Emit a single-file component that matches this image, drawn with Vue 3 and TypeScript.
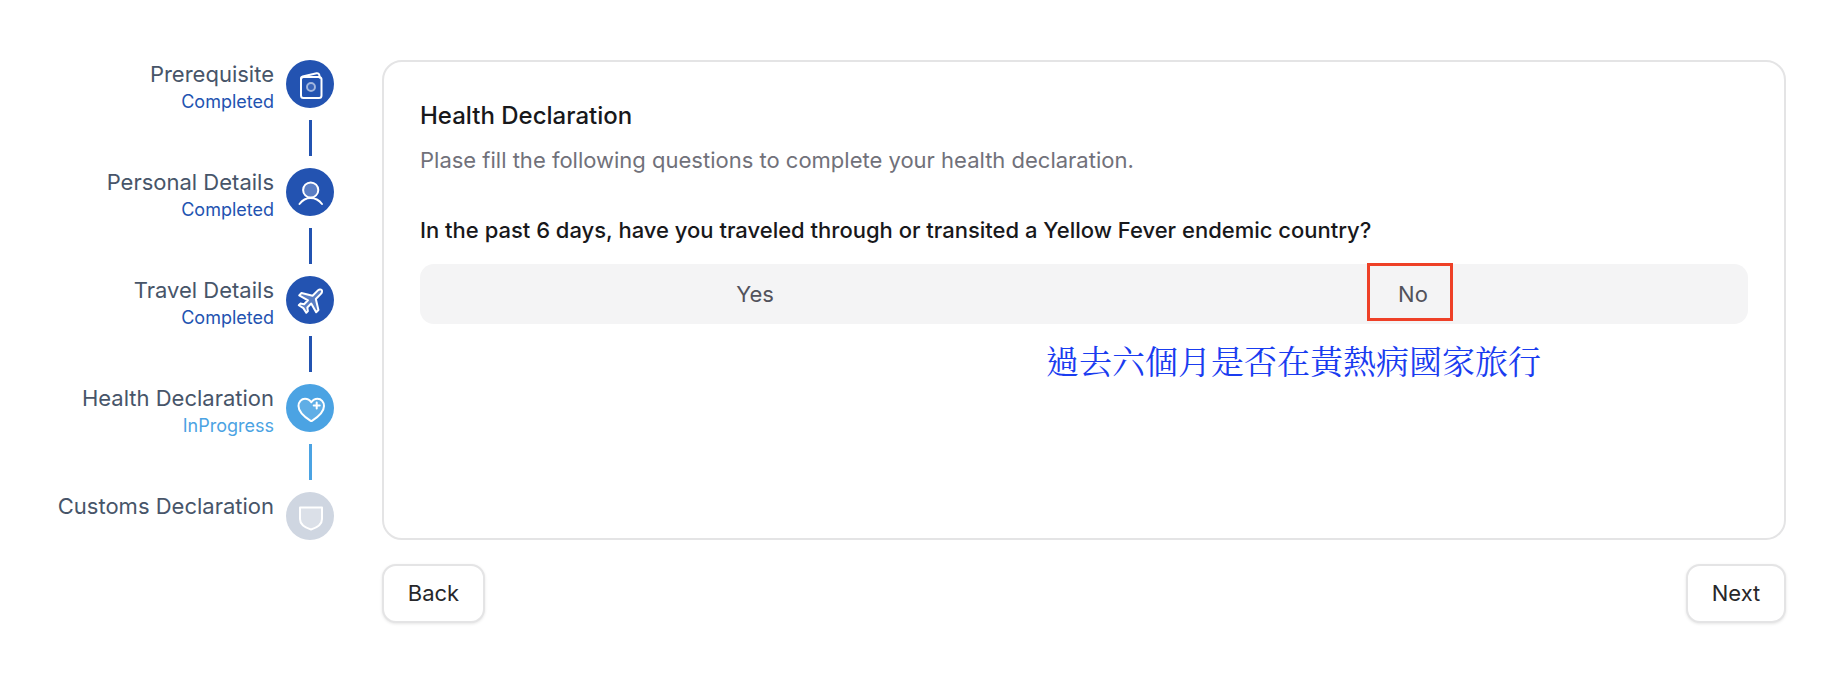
<script setup lang="ts">
interface Step {
  label: string;
  status: string;
  state: "done" | "active" | "todo";
  icon: string;
}
const steps: Step[] = [
  { label: "Prerequisite", status: "Completed", state: "done", icon: "book" },
  { label: "Personal Details", status: "Completed", state: "done", icon: "user" },
  { label: "Travel Details", status: "Completed", state: "done", icon: "plane" },
  { label: "Health Declaration", status: "InProgress", state: "active", icon: "heart" },
  { label: "Customs Declaration", status: "", state: "todo", icon: "shield" },
];
</script>

<template>
  <div class="page">
    <aside class="steps">
      <div v-for="(s, i) in steps" :key="s.label" class="step" :class="s.state">
        <div class="step-text">
          <div class="step-label">{{ s.label }}</div>
          <div v-if="s.status" class="step-status">{{ s.status }}</div>
        </div>
        <div class="step-rail">
          <div class="dot">
            <svg width="48" height="48" viewBox="0 0 48 48" fill="none" stroke="#fff" stroke-width="2" stroke-linecap="round" stroke-linejoin="round">
              <template v-if="s.icon === 'book'">
                <rect x="15" y="17" width="20.500" height="21" rx="2.500" />
                <path d="M15 20v-1.500c0-1 .7-1.700 1.600-1.900l14-3.300c1.300-.3 2.500.5 2.700 1.700l.4 2.500" />
                <circle cx="25" cy="27" r="4" fill="#fff" fill-opacity=".1" stroke-opacity=".55" />
              </template>
              <template v-else-if="s.icon === 'user'">
                <circle cx="24.700" cy="22" r="7.600" fill="#fff" fill-opacity=".25" />
                <path d="M13.500 36c3-4 6.500-6 11-6s8.500 2 11.500 6" />
              </template>
              <template v-else-if="s.icon === 'plane'">
                <path transform="rotate(45 25 24.500) translate(13 12.500)" d="M12 -3c1.300 0 2.300 1.700 2.300 3.300V7.500L24 13.500v3.200L14.300 14v5.500l3 2.200V24L12 22.800 6.700 24v-2.300l3-2.200V14L0 16.700v-3.200L9.700 7.500V.3C9.700-1.300 10.700-3 12-3Z" fill="#fff" fill-opacity=".25" />
              </template>
              <template v-else-if="s.icon === 'heart'">
                <path d="M25.300 18.300c-1.500-2.300-3.900-3.600-6.300-3.600-3.700 0-6.500 3.200-6.500 7.200 0 5.900 6.800 11.400 11.800 14.700.6.400 1.400.4 2 0 5-3.300 11.700-8.800 11.700-14.700 0-4-2.800-7.200-6.500-7.200-2.400 0-4.700 1.300-6.200 3.600Z" fill="#fff" fill-opacity=".12" />
                <path d="M30.700 18.500v6M27.700 21.500h6" />
              </template>
              <template v-else>
                <path d="M14 15.500h22v11.500c0 4.500-4.500 8.500-11 10.500-6.500-2-11-6-11-10.500Z" fill="#fff" fill-opacity=".25" />
              </template>
            </svg>
          </div>
          <div v-if="i < steps.length - 1" class="connector"></div>
        </div>
      </div>
    </aside>

    <main class="main">
      <section class="card">
        <h2 class="title">Health Declaration</h2>
        <p class="subtitle">Plase fill the following questions to complete your health declaration.</p>
        <p class="question">In the past 6 days, have you traveled through or transited a Yellow Fever endemic country?</p>
        <div class="tabs">
          <button class="tab" type="button">Yes</button>
          <button class="tab" type="button">No<span class="highlight"></span></button>
        </div>
        <div class="note">過去六個月是否在黃熱病國家旅行</div>
      </section>
      <div class="actions">
        <button class="action back" type="button">Back</button>
        <button class="action next" type="button">Next</button>
      </div>
    </main>
  </div>
</template>

<style>
html,
body {
  margin: 0;
  background: #fff;
}
</style>

<style scoped>
.page {
  box-sizing: border-box;
  width: 1846px;
  height: 688px;
  display: flex;
  gap: 48px;
  padding: 60px 60px 0 0;
  font-family: Inter, "Noto Sans", sans-serif;
}
.steps {
  flex: 0 0 334px;
  display: flex;
  flex-direction: column;
}
.step {
  display: flex;
  justify-content: flex-end;
  gap: 12px;
}
.step-text {
  text-align: right;
}
.step-label {
  font-size: 22px;
  line-height: 28px;
  color: #475569;
}
.step-status {
  font-size: 18px;
  line-height: 24px;
  margin-top: 2px;
}
.done .step-status {
  color: #2353b1;
}
.active .step-status {
  color: #4ba3e3;
}
.step-rail {
  width: 48px;
  display: flex;
  flex-direction: column;
  align-items: center;
}
.dot {
  width: 48px;
  height: 48px;
  border-radius: 50%;
}
.done .dot {
  background: #2353b1;
}
.active .dot {
  background: #4ba3e3;
}
.todo .dot {
  background: #cfd6e1;
}
.dot svg {
  display: block;
}
.connector {
  width: 3px;
  height: 36px;
  margin: 12px 0 12px 1px;
}
.done .connector {
  background: #2353b1;
}
.active .connector {
  background: #4ba3e3;
}
.main {
  flex: 1;
  min-width: 0;
}
.card {
  box-sizing: border-box;
  height: 480px;
  border: 2px solid #e4e4e5;
  border-radius: 20px;
  padding: 38px 36px 0 36px;
  background: #fff;
}
.title {
  margin: 0;
  font-size: 24px;
  line-height: 32px;
  font-weight: 450;
  color: #18181b;
}
.subtitle {
  margin: 12px 0 0;
  font-size: 22px;
  line-height: 32px;
  color: #71717a;
}
.question {
  margin: 40px 0 0;
  font-size: 22px;
  line-height: 28px;
  font-weight: 450;
  color: #18181b;
}
.tabs {
  position: relative;
  margin-top: 20px;
  height: 60px;
  box-sizing: border-box;
  padding: 6px;
  display: flex;
  background: #f4f4f5;
  border-radius: 14px;
}
.tab {
  position: relative;
  flex: 1;
  border: 0;
  background: none;
  padding: 0;
  font: inherit;
  font-size: 22px;
  color: #52525b;
}
.highlight {
  position: absolute;
  left: 50%;
  top: -7px;
  transform: translateX(-50%);
  margin-left: -3px;
  width: 86px;
  height: 58px;
  box-sizing: border-box;
  border: 3px solid #ee4027;
}
.note {
  margin-top: 18px;
  padding-left: 626px;
  font-family: "Noto Serif CJK TC", "Noto Sans CJK TC", serif;
  font-size: 33px;
  line-height: 36px;
  color: #1a3cf0;
  white-space: nowrap;
}
.actions {
  display: flex;
  justify-content: space-between;
  margin-top: 24px;
}
.action {
  box-sizing: border-box;
  height: 59px;
  border: 2px solid #e4e4e5;
  border-radius: 14px;
  background: #fff;
  box-shadow: 0 1px 3px rgba(0, 0, 0, 0.1);
  font: inherit;
  font-size: 22px;
  color: #27272a;
  padding: 0 0 2px;
}
.back {
  width: 103px;
}
.next {
  width: 100px;
}
</style>
